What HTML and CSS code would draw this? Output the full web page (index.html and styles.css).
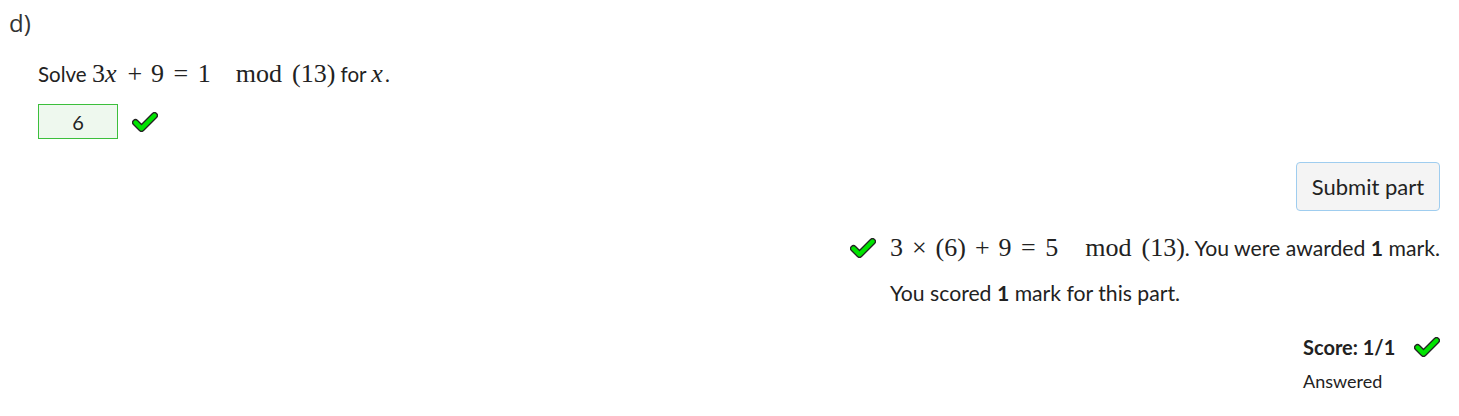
FILE: index.html
```html
<!DOCTYPE html>
<html>
<head>
<meta charset="utf-8">
<link rel="stylesheet" href="styles.css">
</head>
<body>
<div class="part">
  <div class="part-title">d)</div>
  <div class="prompt">
    <p class="question">Solve <span class="math">3<i>x</i><span class="bin">+</span>9<span class="rel">=</span>1<span class="quad"></span>mod<span class="sp2"></span>(13)</span> for <span class="math"><i>x</i></span>.</p>
    <div class="answer-row">
      <div class="answer-box">6</div>
      <svg class="tick" viewBox="0 0 26 20" width="26" height="20"><polyline points="3.5,10.5 9.5,16.5 22.5,3.5" fill="none" stroke="#222" stroke-width="7" stroke-linecap="round" stroke-linejoin="round"/><polyline points="3.5,10.5 9.5,16.5 22.5,3.5" fill="none" stroke="#00e400" stroke-width="4.4" stroke-linecap="round" stroke-linejoin="round"/></svg>
    </div>
  </div>
  <div class="submit-row">
    <button class="submit">Submit part</button>
  </div>
  <div class="feedback">
    <div class="fb-grid">
      <svg class="tick" viewBox="0 0 26 20" width="26" height="20"><polyline points="3.5,10.5 9.5,16.5 22.5,3.5" fill="none" stroke="#222" stroke-width="7" stroke-linecap="round" stroke-linejoin="round"/><polyline points="3.5,10.5 9.5,16.5 22.5,3.5" fill="none" stroke="#00e400" stroke-width="4.4" stroke-linecap="round" stroke-linejoin="round"/></svg>
      <span class="fb-text"><span class="math">3<span class="bin">×</span>(6)<span class="bin">+</span>9<span class="rel">=</span>5<span class="quad"></span>mod<span class="sp2"></span>(13)</span>. You were awarded <b>1</b> mark.</span>
      <span></span>
      <span class="fb-text second">You scored <b>1</b> mark for this part.</span>
    </div>
  </div>
  <div class="score">
    <div class="score-line"><b>Score: 1/1</b>
      <svg class="tick" viewBox="0 0 26 20" width="26" height="20"><polyline points="3.5,10.5 9.5,16.5 22.5,3.5" fill="none" stroke="#222" stroke-width="7" stroke-linecap="round" stroke-linejoin="round"/><polyline points="3.5,10.5 9.5,16.5 22.5,3.5" fill="none" stroke="#00e400" stroke-width="4.4" stroke-linecap="round" stroke-linejoin="round"/></svg>
    </div>
    <div class="answered">Answered</div>
  </div>
</div>
</body>
</html>
```
FILE: styles.css
```css
html, body { margin: 0; padding: 0; background: #fff; }
body { font-family: "Source Sans Pro", Lato, "Open Sans", sans-serif; color: #222; }
.part { padding: 8px 19px 0 9px; }
.part-title { font-family: "Open Sans", sans-serif; font-size: 24px; line-height: 30px; color: #333; }
.prompt { padding-left: 29px; }
.question { margin: 21px 0 0; font-size: 20.5px; line-height: 30px; }
.math { font-family: "Liberation Serif", "DejaVu Serif", serif; font-size: 26px; }
.math i { font-style: italic; margin-right: 2px; }
.bin { margin: 0 9px; }
.rel { margin: 0 9.5px; }
.quad { display: inline-block; width: 25px; }
.sp2 { display: inline-block; width: 10px; }
.fb-text .quad { width: 27px; }
.answer-row { display: flex; align-items: center; gap: 14px; margin-top: 15px; }
.answer-box { width: 78px; height: 33px; border: 1px solid #3cbf3c; background: #eef8ee; display: flex; align-items: center; justify-content: center; font-size: 20px; }
.tick { display: block; }
.submit-row { display: flex; justify-content: flex-end; margin-top: 23px; }
.submit { font-family: inherit; font-size: 22px; color: #222; background: #f4f4f4; border: 1px solid #9fcdef; border-radius: 4px; width: 144px; height: 49px; padding: 0; }
.feedback { display: flex; justify-content: flex-end; margin-top: 22px; }
.fb-grid { display: grid; grid-template-columns: 26px auto; column-gap: 14px; row-gap: 15px; align-items: center; font-size: 21.2px; line-height: 30px; }
.score { margin-left: auto; width: 137px; margin-top: 24px; }
.score-line { display: flex; align-items: center; justify-content: space-between; font-size: 20px; line-height: 30px; }
.answered { font-size: 18px; line-height: 26px; margin-top: 6px; }
```
